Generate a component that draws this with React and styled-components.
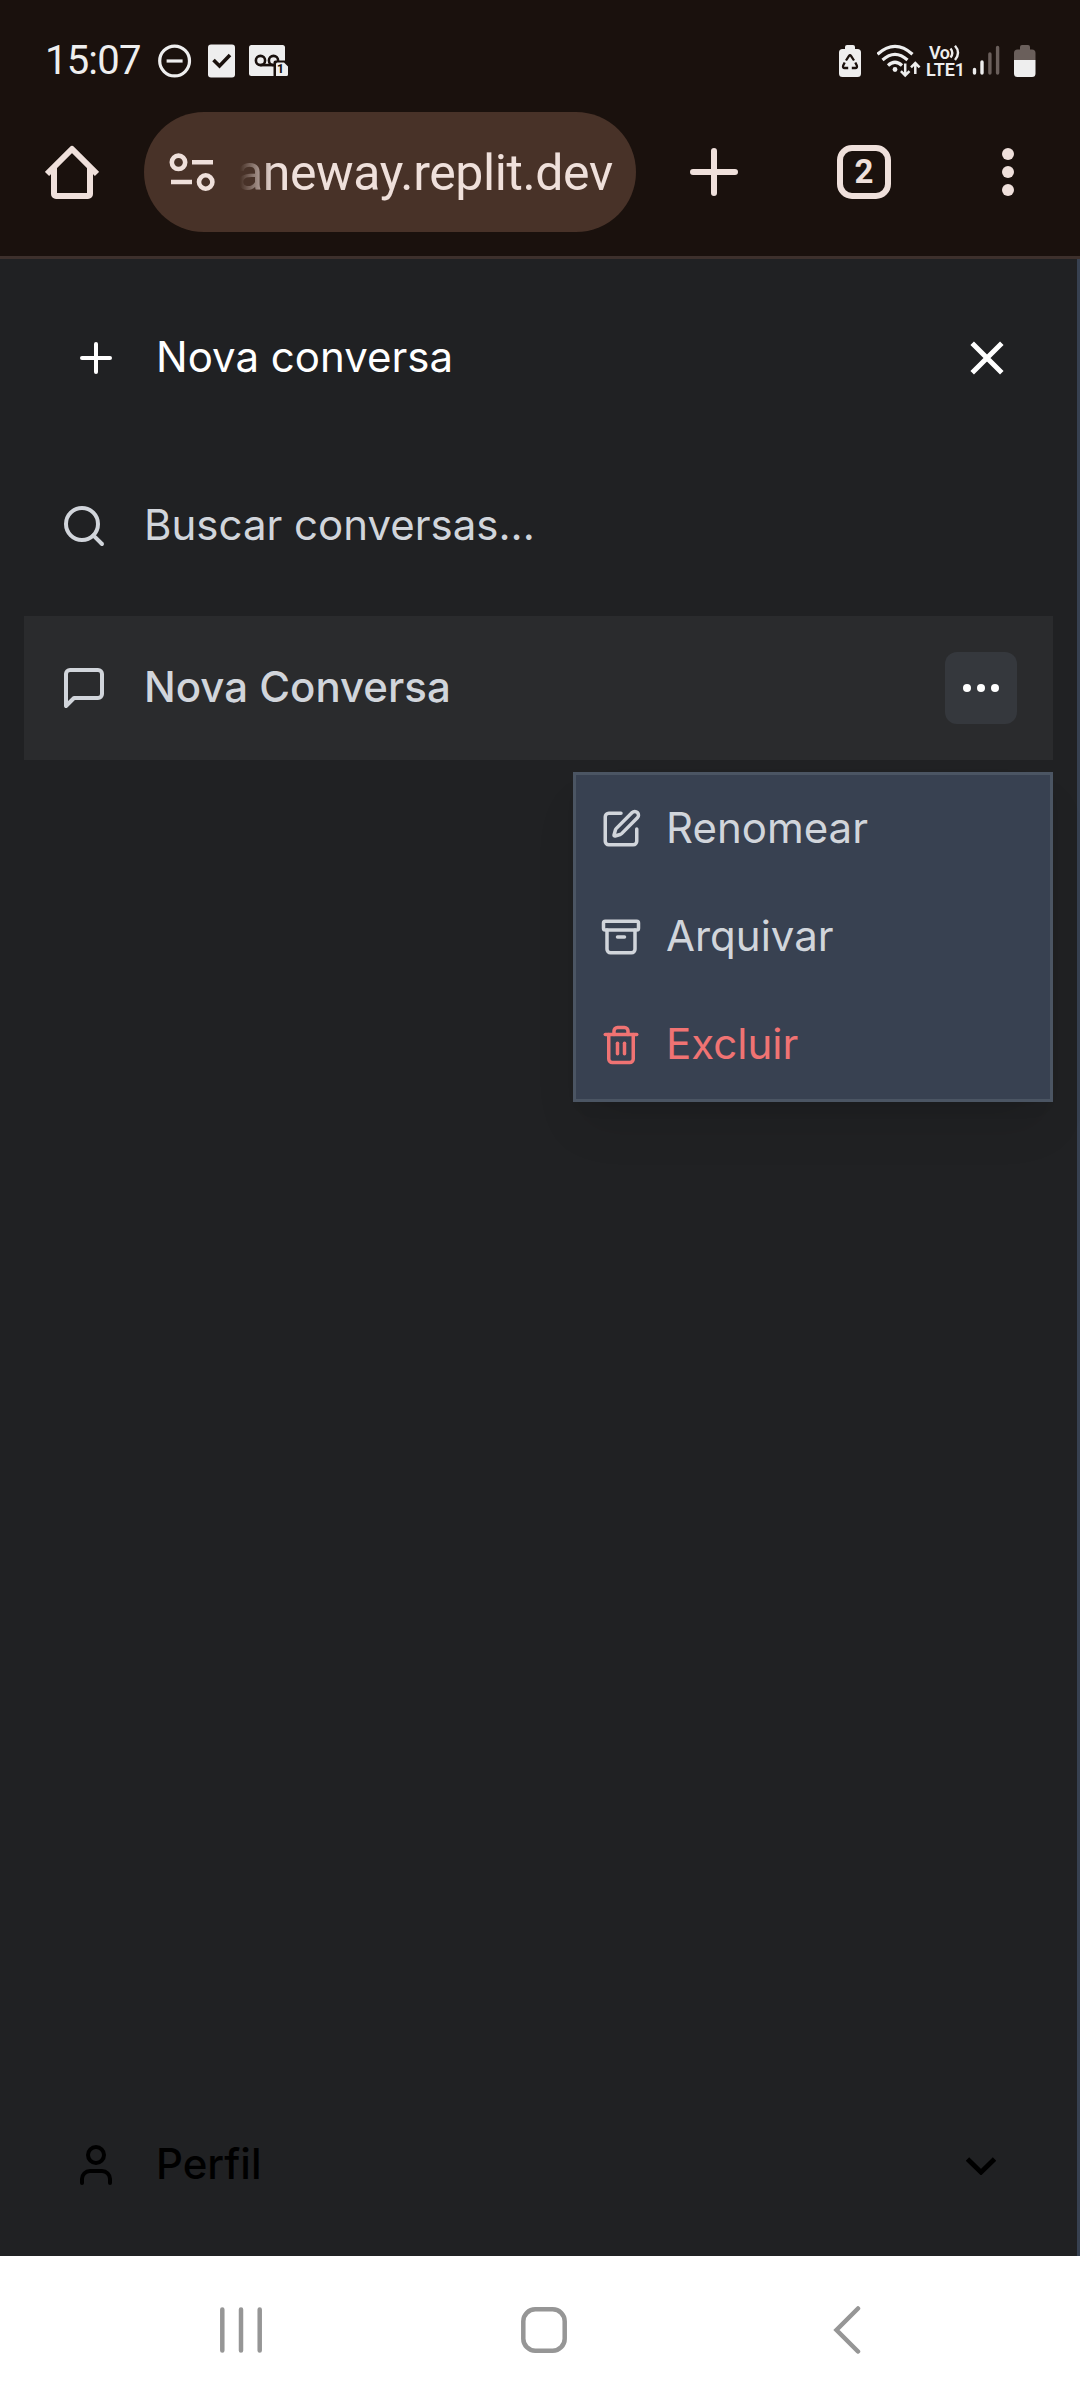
import React from "react";
import styled, { createGlobalStyle } from "styled-components";
import { Plus, Search, User, SquarePen, Archive, Trash2 } from "lucide-react";

const GlobalStyle = createGlobalStyle`
  *, *::before, *::after { box-sizing: border-box; }
  body { margin: 0; background: #202123; }
  button { font: inherit; color: inherit; background: none; border: 0; padding: 0; }
  svg { display: block; flex: none; }
`;

const Screen = styled.div`
  display: flex;
  flex-direction: column;
  width: 1080px;
  height: 2400px;
  overflow: hidden;
  font-family: Inter, "Liberation Sans", sans-serif;
`;

const BrowserChrome = styled.header`
  flex: none;
  height: 259px;
  background: #1a110d;
  border-bottom: 3px solid #3d302c;
`;

const StatusBar = styled.div`
  display: flex;
  justify-content: space-between;
  align-items: center;
  height: 112px;
  padding: 9px 44px 0 45px;
  color: #eeeeee;
  font-family: Roboto, sans-serif;
`;

const StatusGroup = styled.div`
  display: flex;
  align-items: center;
  gap: ${(p) => p.$gap}px;
`;

const Clock = styled.span`
  width: 99px;
  font-size: 40px;
  line-height: 48px;
  letter-spacing: -0.8px;
`;

const Toolbar = styled.div`
  display: flex;
  align-items: center;
  height: 120px;
`;

const ToolButton = styled.button`
  display: flex;
  align-items: center;
  justify-content: center;
  width: ${(p) => p.$width || 144}px;
  height: 120px;
  color: #efe0db;
`;

const AddressPill = styled.div`
  display: flex;
  align-items: center;
  width: 492px;
  height: 120px;
  padding: 0 24px;
  border-radius: 60px;
  background: #483228;
  color: #efe0db;
`;

const Address = styled.span`
  flex: 1;
  display: flex;
  justify-content: flex-end;
  margin-left: 20px;
  padding-top: 2px;
  white-space: nowrap;
  font-family: Roboto, sans-serif;
  font-size: 50px;
  line-height: 64px;
  letter-spacing: -0.4px;
  mask-image: linear-gradient(to right, transparent 4px, #000 38px);
`;

const TabCount = styled.span`
  display: flex;
  align-items: center;
  justify-content: center;
  width: 54px;
  height: 54px;
  border: 6px solid #efe0db;
  border-radius: 15px;
  font-family: Roboto, sans-serif;
  font-weight: 700;
  font-size: 33px;
  line-height: 40px;
`;

const Sidebar = styled.aside`
  flex: 1;
  display: flex;
  flex-direction: column;
  padding: 27px 24px 19px;
  background: #202123;
  border-right: 3px solid #374151;
`;

const HeaderRow = styled.div`
  display: flex;
  align-items: center;
  justify-content: space-between;
  height: 144px;
  padding: 0 48px;
  color: #ffffff;
`;

const IconLabel = styled.span`
  display: flex;
  align-items: center;
  gap: ${(p) => p.$gap || 36}px;
  font-size: 42px;
  line-height: 60px;
  font-weight: ${(p) => p.$weight || 400};
`;

const LabelText = styled.span`
  padding-bottom: 2px;
`;

const SearchRow = styled.div`
  display: flex;
  align-items: center;
  height: 120px;
  margin-top: 36px;
  padding: 0 36px;
  color: #d1d5db;
`;

const ConversationRow = styled.div`
  position: relative;
  display: flex;
  align-items: center;
  justify-content: space-between;
  height: 144px;
  margin-top: 30px;
  padding: 0 36px;
  background: #2a2b2d;
  color: #d1d5db;
`;

const MoreButton = styled.button`
  display: flex;
  align-items: center;
  justify-content: center;
  width: 72px;
  height: 72px;
  border-radius: 12px;
  background: #35383d;
  color: #ffffff;
`;

const Menu = styled.div`
  position: absolute;
  top: 156px;
  right: 0;
  width: 480px;
  border: 3px solid #4b5563;
  background: #384151;
  box-shadow: 0 30px 45px -9px rgba(0, 0, 0, 0.1), 0 12px 18px -12px rgba(0, 0, 0, 0.1);
`;

const MenuItem = styled.div`
  display: flex;
  align-items: center;
  height: 108px;
  padding: 0 24px;
  color: ${(p) => (p.$danger ? "#f07373" : "#d1d5db")};
`;

const ProfileRow = styled(HeaderRow)`
  margin-top: auto;
  padding-right: 57px;
  color: #000000;
`;

const NavBar = styled.nav`
  flex: none;
  display: flex;
  align-items: center;
  height: 144px;
  padding: 0 82px 0 89px;
  background: #ffffff;
`;

const NavButton = styled.button`
  flex: 1;
  display: flex;
  align-items: center;
  justify-content: center;
  height: 144px;
  padding-top: 4px;
`;

const NetworkLabel = styled.span`
  display: flex;
  flex-direction: column;
  width: 38px;
  font-size: 18px;
  line-height: 17px;
  font-weight: 600;
`;

const NetworkTop = styled.span`
  display: flex;
  padding-left: 3px;
  letter-spacing: -0.6px;
`;

const SimNumber = styled.span`
  position: absolute;
  right: 4px;
  bottom: 1px;
  color: #1a110d;
  font-size: 12px;
  line-height: 13px;
  font-weight: 800;
`;

const VoicemailBox = styled.span`
  position: relative;
  margin-left: -2px;
`;

const DoNotDisturb = () => (
  <svg width="34" height="34" viewBox="0 0 34 34" fill="none" stroke="currentColor" strokeWidth="3.2">
    <circle cx="16.6" cy="17" r="14.9" />
    <path d="M8.600 17h16" />
  </svg>
);

const TaskDone = () => (
  <svg width="27" height="34" viewBox="0 0 27 34">
    <rect y="0.5" width="27" height="33" rx="3" fill="currentColor" />
    <path d="M5.500 16l6 6L22 11" fill="none" stroke="#1a110d" strokeWidth="3.600" />
  </svg>
);

const Voicemail = () => (
  <VoicemailBox>
    <svg width="39" height="32" viewBox="0 0 39 32">
      <rect width="36" height="31" rx="2.500" fill="currentColor" />
      <g fill="none" stroke="#1a110d" strokeWidth="2.600">
        <circle cx="11.500" cy="15.500" r="4.600" />
        <circle cx="24.500" cy="15.500" r="4.600" />
        <path d="M11.500 20.100h13" />
      </g>
      <path d="M24.500 32V17.500a2 2 0 0 1 2-2H39V32z" fill="#1a110d" />
      <path d="M27 31V19a1.500 1.500 0 0 1 1.500-1.500H35l4 4V29.500a1.500 1.500 0 0 1-1.500 1.500z" fill="currentColor" />
    </svg>
    <SimNumber>1</SimNumber>
  </VoicemailBox>
);

const BatterySaver = () => (
  <svg width="22" height="32" viewBox="0 0 22 32">
    <path d="M6 4V2a2 2 0 0 1 2-2h6a2 2 0 0 1 2 2v2h2.500a3.500 3.500 0 0 1 3.500 3.500v21a3.500 3.500 0 0 1-3.500 3.500h-15A3.500 3.500 0 0 1 0 28.500v-21A3.500 3.500 0 0 1 3.500 4z" fill="currentColor" />
    <g fill="none" stroke="#1a110d" strokeWidth="2.300" strokeLinejoin="round">
      <path d="M7 15.500l3-4.700q1-1.400 2 0l3 4.700" />
      <path d="M5.700 17.500l-1.500 3q-.8 2.500 1.500 2.500h3.500" />
      <path d="M16.300 17.500l1.500 3q.8 2.500-1.500 2.500h-3.500" />
    </g>
  </svg>
);

const Wifi = () => (
  <svg width="44" height="34" viewBox="0 0 44 34" fill="none" stroke="currentColor" strokeWidth="3.200">
    <path d="M.5 10.200Q18 -5.600 35.500 10.200" />
    <path d="M5.500 16Q18 4.800 30.500 16" />
    <path d="M11 21.500Q18 15 25 21.500" />
    <circle cx="18" cy="25.500" r="2.400" fill="currentColor" stroke="none" />
    <g strokeWidth="2.500">
      <path d="M28.200 19.500v12M23.900 27.200l4.300 4.300 4.300-4.300" />
      <path d="M38.300 30V19M34 23.300l4.300-4.300 4.300 4.300" />
    </g>
  </svg>
);

const VoiceWaves = () => (
  <svg width="12" height="17" viewBox="0 0 12 17" fill="none" stroke="currentColor" strokeWidth="2.400">
    <path d="M1.500 4.500q3.600 4.300 0 9M6 1.800q6 6.800 0 14.200" />
  </svg>
);

const Signal = () => (
  <svg width="28" height="31" viewBox="0 0 28 31" fill="none" stroke="currentColor" strokeWidth="3.400" strokeLinecap="round">
    <path d="M2.500 24.500v3.500M10 17v11" />
    <path d="M17.900 9v19M25.600 2.500v25.500" stroke="#6a5f5b" />
  </svg>
);

const Battery = () => (
  <svg width="22" height="32" viewBox="0 0 22 32">
    <path d="M0 15V8a3.500 3.500 0 0 1 3.500-3.500H6V2a2 2 0 0 1 2-2h6a2 2 0 0 1 2 2v2.500h2A3.500 3.500 0 0 1 21.500 8v7z" fill="#6a5f5b" />
    <path d="M0 15h21.500v13.500a3.500 3.500 0 0 1-3.500 3.500H3.500A3.500 3.500 0 0 1 0 28.500z" fill="currentColor" />
  </svg>
);

const HomeIcon = () => (
  <svg width="54" height="54" viewBox="0 0 54 54" fill="none" stroke="currentColor" strokeWidth="6" strokeLinejoin="round">
    <path d="M2 29L27 4l25 25" />
    <path d="M9 22v27a2 2 0 0 0 2 2h32a2 2 0 0 0 2-2V22" />
  </svg>
);

const TuneIcon = () => (
  <svg width="48" height="40" viewBox="0 0 48 40" fill="none" stroke="currentColor" strokeWidth="4.600">
    <circle cx="10.500" cy="10.300" r="6.700" />
    <path d="M24 10.300h21M3 30h21" />
    <circle cx="37.700" cy="30" r="6.700" />
  </svg>
);

const NewTabIcon = () => (
  <svg width="48" height="48" viewBox="0 0 48 48" stroke="currentColor" strokeWidth="6" strokeLinecap="round">
    <path d="M24 3v42M3 24h42" />
  </svg>
);

const OverflowIcon = () => (
  <svg width="12" height="48" viewBox="0 0 12 48" fill="currentColor">
    <circle cx="6" cy="6" r="6" />
    <circle cx="6" cy="24" r="6" />
    <circle cx="6" cy="42" r="6" />
  </svg>
);

const CloseIcon = () => (
  <svg width="36" height="36" viewBox="0 0 36 36" stroke="currentColor" strokeWidth="5">
    <path d="M3.200 3.200l29.600 29.600M32.800 3.200L3.200 32.800" />
  </svg>
);

const ChatIcon = () => (
  <svg width="48" height="48" viewBox="0 0 24 24" fill="none" stroke="currentColor" strokeWidth="2" strokeLinecap="round" strokeLinejoin="round">
    <path d="M21 15a2 2 0 0 1-2 2H7l-4 4V5a2 2 0 0 1 2-2h14a2 2 0 0 1 2 2z" />
  </svg>
);

const DotsIcon = () => (
  <svg width="36" height="8" viewBox="0 0 36 8" fill="currentColor">
    <circle cx="4" cy="4" r="4" />
    <circle cx="18" cy="4" r="4" />
    <circle cx="32" cy="4" r="4" />
  </svg>
);

const ChevronIcon = () => (
  <svg width="30" height="20" viewBox="0 0 30 20" fill="none" stroke="currentColor" strokeWidth="4.800">
    <path d="M1.500 4L15 17.200 28.500 4" />
  </svg>
);

const RecentsIcon = () => (
  <svg width="42" height="46" viewBox="0 0 42 46" stroke="#969696" strokeWidth="4.500" strokeLinecap="round">
    <path d="M2.300 2.500v41M21 2.500v41M39.700 2.500v41" />
  </svg>
);

const NavHomeIcon = () => (
  <svg width="46" height="46" viewBox="0 0 46 46" fill="none" stroke="#969696" strokeWidth="4.500">
    <rect x="2.300" y="2.300" width="41.400" height="41.400" rx="12" />
  </svg>
);

const BackIcon = () => (
  <svg width="28" height="48" viewBox="0 0 28 48" fill="none" stroke="#969696" strokeWidth="4.500" strokeLinecap="round">
    <path d="M25 2.500L3.500 24 25 45.500" />
  </svg>
);

const menuItems = [
  { label: "Renomear", Icon: SquarePen },
  { label: "Arquivar", Icon: Archive },
  { label: "Excluir", Icon: Trash2, danger: true },
];

export default function App() {
  return (
    <Screen>
      <GlobalStyle />
      <BrowserChrome>
        <StatusBar>
          <StatusGroup $gap={14}>
            <Clock>15:07</Clock>
            <StatusGroup $gap={16}>
              <DoNotDisturb />
              <TaskDone />
              <Voicemail />
            </StatusGroup>
          </StatusGroup>
          <StatusGroup $gap={8}>
            <StatusGroup $gap={16}>
              <BatterySaver />
              <StatusGroup $gap={5}>
                <Wifi />
                <NetworkLabel>
                  <NetworkTop>
                    Vo
                    <VoiceWaves />
                  </NetworkTop>
                  LTE1
                </NetworkLabel>
              </StatusGroup>
            </StatusGroup>
            <StatusGroup $gap={14}>
              <Signal />
              <Battery />
            </StatusGroup>
          </StatusGroup>
        </StatusBar>
        <Toolbar>
          <ToolButton>
            <HomeIcon />
          </ToolButton>
          <AddressPill>
            <TuneIcon />
            <Address>aneway.replit.dev</Address>
          </AddressPill>
          <ToolButton $width={156}>
            <NewTabIcon />
          </ToolButton>
          <ToolButton>
            <TabCount>2</TabCount>
          </ToolButton>
          <ToolButton>
            <OverflowIcon />
          </ToolButton>
        </Toolbar>
      </BrowserChrome>

      <Sidebar>
        <HeaderRow>
          <IconLabel>
            <Plus size={48} />
            <LabelText>Nova conversa</LabelText>
          </IconLabel>
          <CloseIcon />
        </HeaderRow>
        <SearchRow>
          <IconLabel>
            <Search size={48} />
            <LabelText>Buscar conversas...</LabelText>
          </IconLabel>
        </SearchRow>
        <ConversationRow>
          <IconLabel $weight={500}>
            <ChatIcon />
            <LabelText>Nova Conversa</LabelText>
          </IconLabel>
          <MoreButton>
            <DotsIcon />
          </MoreButton>
          <Menu>
            {menuItems.map(({ label, Icon, danger }) => (
              <MenuItem key={label} $danger={danger}>
                <IconLabel $gap={24}>
                  <Icon size={42} />
                  <LabelText>{label}</LabelText>
                </IconLabel>
              </MenuItem>
            ))}
          </Menu>
        </ConversationRow>
        <ProfileRow>
          <IconLabel $weight={500}>
            <User size={48} />
            <LabelText>Perfil</LabelText>
          </IconLabel>
          <ChevronIcon />
        </ProfileRow>
      </Sidebar>

      <NavBar>
        <NavButton>
          <RecentsIcon />
        </NavButton>
        <NavButton>
          <NavHomeIcon />
        </NavButton>
        <NavButton>
          <BackIcon />
        </NavButton>
      </NavBar>
    </Screen>
  );
}
